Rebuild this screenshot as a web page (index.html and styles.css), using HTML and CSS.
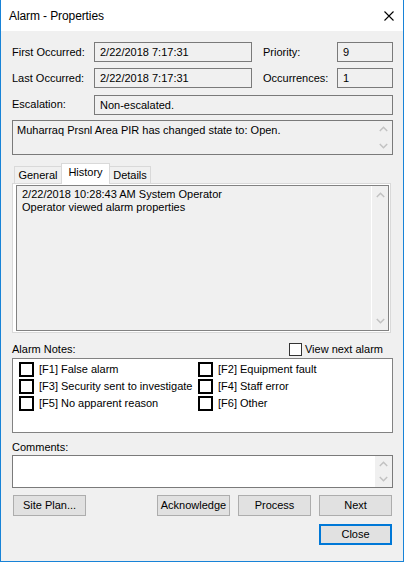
FILE: index.html
```html
<!DOCTYPE html>
<html>
<head>
<meta charset="utf-8">
<title>Alarm - Properties</title>
<link rel="stylesheet" href="styles.css">
</head>
<body>
<div class="window">
  <div class="titlebar">
    <span class="title">Alarm - Properties</span>
    <svg class="close-x" width="10" height="10" viewBox="0 0 10 10"><path d="M0.5 0.5 L9.5 9.5 M9.5 0.5 L0.5 9.5" stroke="#000" stroke-width="1.1" fill="none"/></svg>
  </div>
  <div class="content">
    <div class="info">
      <span class="lbl">First Occurred:</span>
      <div class="field">2/22/2018 7:17:31</div>
      <span class="lbl right">Priority:</span>
      <div class="field">9</div>
      <span class="lbl">Last Occurred:</span>
      <div class="field">2/22/2018 7:17:31</div>
      <span class="lbl right">Occurrences:</span>
      <div class="field">1</div>
      <span class="lbl">Escalation:</span>
      <div class="field wide">Non-escalated.</div>
    </div>

    <div class="msgbox">
      <div class="msg-text">Muharraq Prsnl Area PIR has changed state to: Open.</div>
      <div class="sb">
        <div class="sb-btn"><svg width="9" height="6" viewBox="0 0 9 6"><polyline points="0.8,5 4.5,1.3 8.2,5" fill="none" stroke="#c2c2c2" stroke-width="1.5"/></svg></div>
        <div class="sb-btn"><svg width="9" height="6" viewBox="0 0 9 6"><polyline points="0.8,1 4.5,4.7 8.2,1" fill="none" stroke="#c2c2c2" stroke-width="1.5"/></svg></div>
      </div>
    </div>

    <div class="tabs">
      <div class="tab general">General</div>
      <div class="tab history active">History</div>
      <div class="tab details">Details</div>
    </div>
    <div class="panel">
      <div class="history-box">
        <div class="history-text">
          <div>2/22/2018 10:28:43 AM System Operator</div>
          <div>Operator viewed alarm properties</div>
        </div>
        <div class="sb hist">
          <div class="sb-btn"><svg width="9" height="6" viewBox="0 0 9 6"><polyline points="0.8,5 4.5,1.3 8.2,5" fill="none" stroke="#c2c2c2" stroke-width="1.5"/></svg></div>
          <div class="sb-btn"><svg width="9" height="6" viewBox="0 0 9 6"><polyline points="0.8,1 4.5,4.7 8.2,1" fill="none" stroke="#c2c2c2" stroke-width="1.5"/></svg></div>
        </div>
      </div>
    </div>

    <div class="notes-head">
      <span>Alarm Notes:</span>
      <label class="viewnext"><span class="cb-small"></span><span>View next alarm</span></label>
    </div>
    <div class="notes">
      <div class="note"><span class="cb"></span><span>[F1] False alarm</span></div>
      <div class="note"><span class="cb"></span><span>[F2] Equipment fault</span></div>
      <div class="note"><span class="cb"></span><span>[F3] Security sent to investigate</span></div>
      <div class="note"><span class="cb"></span><span>[F4] Staff error</span></div>
      <div class="note"><span class="cb"></span><span>[F5] No apparent reason</span></div>
      <div class="note"><span class="cb"></span><span>[F6] Other</span></div>
    </div>

    <div class="comments-lbl">Comments:</div>
    <div class="comments">
      <div class="sb light">
        <div class="sb-btn"><svg width="9" height="6" viewBox="0 0 9 6"><polyline points="0.8,5 4.5,1.3 8.2,5" fill="none" stroke="#c2c2c2" stroke-width="1.5"/></svg></div>
        <div class="sb-btn"><svg width="9" height="6" viewBox="0 0 9 6"><polyline points="0.8,1 4.5,4.7 8.2,1" fill="none" stroke="#c2c2c2" stroke-width="1.5"/></svg></div>
      </div>
    </div>

    <div class="buttons">
      <button class="btn">Site Plan...</button>
      <div class="btn-group">
        <button class="btn">Acknowledge</button>
        <button class="btn">Process</button>
        <button class="btn">Next</button>
      </div>
    </div>
    <div class="close-row">
      <button class="btn default">Close</button>
    </div>
  </div>
</div>
</body>
</html>
```

FILE: styles.css
```css
* { box-sizing: border-box; }
html, body { margin: 0; padding: 0; }
body {
  font-family: "Liberation Sans", Arial, sans-serif;
  font-size: 11px;
  color: #000;
  background: #fff;
}
.window {
  width: 404px;
  height: 562px;
  border: 1px solid #1883d7;
  border-top: none;
  display: flex;
  flex-direction: column;
}
.titlebar {
  height: 31px;
  flex: none;
  background: #fff;
  display: flex;
  align-items: center;
  padding: 0 9px 0 8px;
}
.title {
  flex: 1;
  font-size: 12px;
  letter-spacing: -0.1px;
  padding-top: 1px;
}
.close-x { display: block; }
.content {
  flex: 1;
  background: #f0f0f0;
  padding: 11px 10px 0 11px;
  display: flex;
  flex-direction: column;
}
.info {
  display: grid;
  grid-template-columns: 82px 158px 85px 56px;
  grid-template-rows: 20px 20px 21px;
  row-gap: 6px;
}
.lbl {
  display: flex;
  align-items: center;
  line-height: 13px;
  white-space: nowrap;
}
.lbl.right { padding-left: 11px; }
.field {
  border: 1px solid #7a7a7a;
  padding: 0 5px;
  display: flex;
  align-items: center;
  white-space: nowrap;
  line-height: 13px;
}
.field.wide {
  grid-column: 2 / 5;
  height: 20px;
  align-self: end;
}
.msgbox {
  margin-top: 5px;
  height: 35px;
  border: 1px solid #7a7a7a;
  display: flex;
}
.msg-text {
  flex: 1;
  padding: 3px 4px;
  line-height: 13px;
}
.sb {
  width: 17px;
  flex: none;
  display: flex;
  flex-direction: column;
  justify-content: space-between;
}
.sb-btn {
  height: 16px;
  display: flex;
  align-items: center;
  justify-content: center;
}
.sb-btn svg { display: block; }
.sb.hist { border-left: 1px solid #fff; }
.sb.light { background: #f0f0f0; }

.tabs {
  margin-top: 8px;
  height: 20px;
  display: flex;
  align-items: flex-end;
  padding-left: 2px;
  position: relative;
  z-index: 1;
}
.tab {
  height: 17px;
  border: 1px solid #d9d9d9;
  border-bottom: none;
  background: #f0f0f0;
  display: flex;
  align-items: center;
  justify-content: center;
  line-height: 13px;
}
.tab.general { width: 47px; border-right: none; }
.tab.history {
  width: 49px;
  height: 21px;
  margin-bottom: -1px;
  background: #fff;
  align-items: flex-start;
  padding-top: 2px;
}
.tab.details { width: 41px; border-left: none; }
.panel {
  height: 150px;
  width: 379px;
  border: 1px solid #d9d9d9;
  background: #fff;
  padding: 1px 1px 1px 3px;
}
.history-box {
  height: 100%;
  border: 1px solid #828282;
  background: #f0f0f0;
  display: flex;
}
.history-text {
  flex: 1;
  padding: 2px 5px;
  line-height: 13px;
}
.history-box .sb { padding: 1px 0; }

.notes-head {
  margin-top: 10px;
  height: 13px;
  display: flex;
  align-items: center;
  line-height: 13px;
}
.viewnext {
  margin-left: auto;
  margin-right: 10px;
  display: flex;
  align-items: center;
  gap: 3px;
}
.cb-small {
  width: 13px;
  height: 13px;
  border: 1px solid #333;
  background: #fff;
}
.notes {
  margin-top: 2px;
  height: 75px;
  border: 1px solid #828282;
  background: #fff;
  padding: 2px 0 0 6px;
  display: grid;
  grid-template-columns: 179px 1fr;
  grid-auto-rows: 17px;
  align-content: start;
}
.note {
  display: flex;
  align-items: center;
  gap: 5px;
  white-space: nowrap;
  line-height: 13px;
}
.cb {
  width: 15px;
  height: 15px;
  flex: none;
  border: 2px solid #000;
  background: #fff;
}
.comments-lbl {
  margin-top: 8px;
  line-height: 13px;
}
.comments {
  margin-top: 1px;
  height: 33px;
  border: 1px solid #7a7a7a;
  background: #fff;
  display: flex;
  justify-content: flex-end;
}
.buttons {
  margin-top: 7px;
  display: flex;
  justify-content: space-between;
  padding: 0 1px;
}
.btn-group {
  display: flex;
  gap: 8px;
}
.btn {
  width: 73px;
  height: 21px;
  margin: 0;
  padding: 0;
  background: #e1e1e1;
  border: 1px solid #adadad;
  font-family: inherit;
  font-size: 11px;
  color: #000;
  display: flex;
  align-items: center;
  justify-content: center;
  line-height: 13px;
}
.btn.default { border: 2px solid #0078d7; }
.close-row {
  margin-top: 8px;
  display: flex;
  justify-content: flex-end;
  padding-right: 1px;
}
```
